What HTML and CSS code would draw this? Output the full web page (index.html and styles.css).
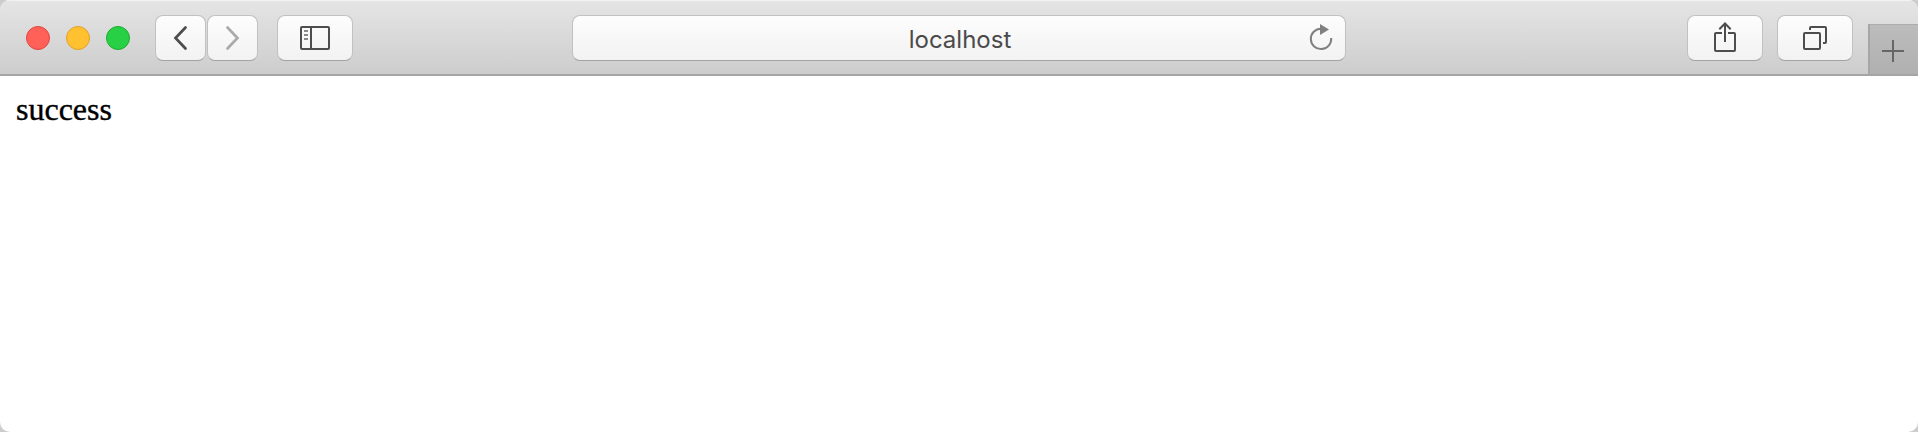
FILE: index.html
```html
<!DOCTYPE html>
<html lang="en">
<head>
<meta charset="utf-8">
<title>localhost</title>
<link rel="stylesheet" href="styles.css">
</head>
<body>
<div class="window">
  <header class="toolbar">
    <div class="lights">
      <span class="light close"></span>
      <span class="light minimize"></span>
      <span class="light zoom"></span>
    </div>
    <div class="nav">
      <button class="btn small" aria-label="Back">
        <svg width="51" height="46" viewBox="0 0 51 46"><path d="M30.5 12.5 L20.5 23 L30.5 33.5" stroke="#4d4d4d" stroke-width="2.7" stroke-linecap="round"/></svg>
      </button>
      <button class="btn small" aria-label="Forward">
        <svg width="51" height="46" viewBox="0 0 51 46"><path d="M20.5 12.5 L30.5 23 L20.5 33.5" stroke="#aaa" stroke-width="2.7" stroke-linecap="round"/></svg>
      </button>
    </div>
    <button class="btn sidebar" aria-label="Sidebar">
      <svg width="76" height="46" viewBox="0 0 76 46"><rect x="24" y="12" width="28" height="22" rx="1" stroke="#4d4d4d" stroke-width="2"/><path d="M34 12V34" stroke="#4d4d4d" stroke-width="2"/><path d="M27 16H31M27 20H31M27 24H31" stroke="#8a8a8a" stroke-width="2"/></svg>
    </button>
    <div class="address">
      <span class="host">localhost</span>
      <svg class="reload" width="28" height="34" viewBox="0 0 28 34"><path d="M16 7.7A10.2 10.2 0 1 0 26.2 17" stroke="#808080" stroke-width="2"/><path d="M15 3 L24 8.5 L15 14Z" fill="#808080"/></svg>
    </div>
    <div class="actions">
      <button class="btn" aria-label="Share">
        <svg width="76" height="46" viewBox="0 0 76 46"><path d="M35 18H29Q28 18 28 19V35Q28 36 29 36H47Q48 36 48 35V19Q48 18 47 18H41" stroke="#4d4d4d" stroke-width="2"/><path d="M38 27V9M32.3 14.3L38 8.5L43.7 14.3" stroke="#4d4d4d" stroke-width="2"/></svg>
      </button>
      <button class="btn" aria-label="Tabs">
        <svg width="76" height="46" viewBox="0 0 76 46"><rect x="27" y="18" width="16" height="16" rx="1" stroke="#4d4d4d" stroke-width="2"/><path d="M33 15V13Q33 12 34 12H48Q49 12 49 13V27Q49 28 48 28H46" stroke="#4d4d4d" stroke-width="2"/></svg>
      </button>
    </div>
    <button class="new-tab" aria-label="New tab">
      <svg width="48" height="49" viewBox="0 0 48 49"><path d="M12 26H34M23 15V37" stroke="#666" stroke-width="2"/></svg>
    </button>
  </header>
  <main class="page">success</main>
</div>
</body>
</html>
```
FILE: styles.css
```css
* { box-sizing: border-box; }
body { margin: 0; background: #ccc; }
button { margin: 0; padding: 0; border: 0; font: inherit; }
svg { display: block; fill: none; flex: none; }
.window {
  height: 432px;
  overflow: hidden;
  background: #fff;
  border-radius: 10px;
}
.toolbar {
  display: flex;
  height: 76px;
  padding: 15px 0 0 26px;
  background: linear-gradient(#e5e5e5, #cdcdcd);
  border-bottom: 2px solid #a5a5a5;
  box-shadow: inset 0 1px #f3f3f3;
}
.toolbar > * { flex: none; }
.lights { display: flex; gap: 16px; padding-top: 11px; }
.light { width: 24px; height: 24px; border-radius: 50%; border: 1px solid; }
.close { background: #ff6058; border-color: #e2463f; }
.minimize { background: #ffc130; border-color: #e1a02a; }
.zoom { background: #27d045; border-color: #1eac30; }
.nav { display: flex; gap: 1px; margin-left: 25px; }
.btn, .address {
  height: 46px;
  border: 1px solid #c1c1c1;
  border-bottom-color: #a3a3a3;
  border-radius: 8px;
  background: linear-gradient(#fdfdfd, #f2f2f2);
}
.btn {
  display: flex;
  align-items: center;
  justify-content: center;
  width: 76px;
}
.btn.small { width: 51px; }
.sidebar { margin-left: 19px; }
.address {
  display: grid;
  grid-template-columns: 50px 1fr 50px;
  align-items: center;
  width: 774px;
  margin-left: 219px;
}
.host {
  grid-column: 2;
  padding-top: 3px;
  padding-left: 2px;
  text-align: center;
  font: 24px/41px Inter, "Liberation Sans", sans-serif;
  color: #4a4a4a;
}
.reload { justify-self: start; margin-left: 10px; }
.actions { display: flex; gap: 14px; margin-left: 341px; }
.new-tab {
  display: flex;
  width: 50px;
  height: 50px;
  margin: 9px 0 0 15px;
  background: linear-gradient(#bcbcbc, #b0b0b0);
  border-left: 2px solid #a6a6a6;
  border-top: 1px solid #adadad;
}
.page {
  padding: 15px 16px;
  font: 32px/36px "Liberation Serif", "Times New Roman", serif;
  color: #000;
  -webkit-text-stroke: 0.4px #000;
}
```
